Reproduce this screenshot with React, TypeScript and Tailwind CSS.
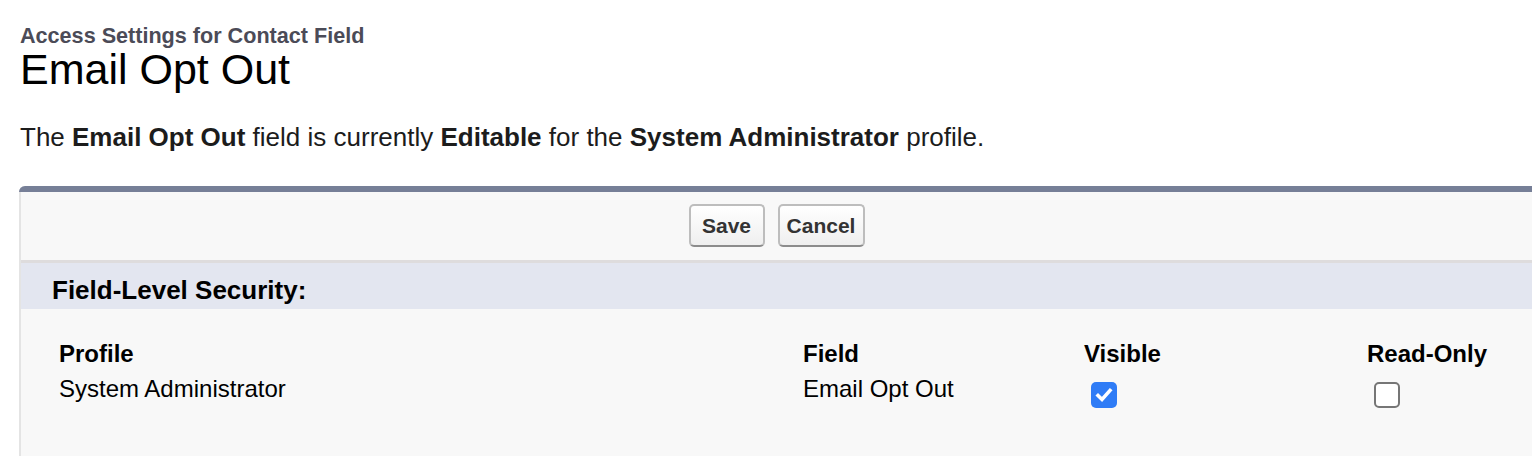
import type { FC } from 'react';

const font = { fontFamily: '"Liberation Sans", Arial, sans-serif' };

const Button: FC<{ label: string; width: string }> = ({ label, width }) => (
  <button
    className={`${width} h-[43px] rounded-[5px] border-2 border-[#bdbdbd] border-b-[#8c8c8c] bg-gradient-to-b from-white to-[#efefef] text-[21px] font-bold leading-none text-[#333]`}
  >
    {label}
  </button>
);

const Checkbox: FC<{ checked?: boolean }> = ({ checked }) =>
  checked ? (
    <div className="ml-[7px] mt-[6px] flex h-[26px] w-[26px] items-center justify-center rounded-[5px] bg-[#2f7cf6]">
      <svg width="20" height="20" viewBox="0 0 20 20" fill="none">
        <path d="M4 10.5 L8 14.5 L16 5.5" stroke="white" strokeWidth="3.6" strokeLinecap="square" />
      </svg>
    </div>
  ) : (
    <div className="ml-[7px] mt-[6px] h-[26px] w-[26px] rounded-[5px] border-2 border-[#767676] bg-white" />
  );

export default function App() {
  return (
    <div className="min-h-[456px] w-[1532px] overflow-hidden bg-white pl-[20px] text-black" style={font}>
      {/* Title */}
      <div className="pt-[25px] text-[21.6px] font-bold leading-[22px] text-[#4b4b57]">
        Access Settings for Contact Field
      </div>
      <h1 className="text-[43px] leading-[44px]">Email Opt Out</h1>

      <p className="mt-[32px] text-[26px] leading-[28px] text-[#1c1c1c]">
        The <b>Email Opt Out</b> field is currently <b>Editable</b> for the <b>System Administrator</b> profile.
      </p>

      {/* Panel */}
      <div className="-ml-[1px] mt-[35px] h-[270px] rounded-tl-[6px] border-l-2 border-[#e4e4e4] bg-[#f8f8f8]">
        <div className="-ml-[2px] h-[6px] rounded-tl-[6px] bg-[#767f97]" />

        <div className="flex justify-center gap-[13px] pb-[13px] pt-[12px]">
          <Button label="Save" width="w-[76px]" />
          <Button label="Cancel" width="w-[87px]" />
        </div>

        <div className="h-[3px] bg-[#dedcdd]" />

        <div className="h-[46px] bg-[#e3e6f0] pl-[31px] pt-[14px] text-[26px] font-bold leading-[26px]">
          Field-Level Security:
        </div>

        {/* Table */}
        <div className="grid grid-cols-[744px_281px_283px_1fr] pl-[38px] pt-[32px] text-[24px] leading-[26px]">
          <div className="font-bold">Profile</div>
          <div className="font-bold">Field</div>
          <div className="font-bold">Visible</div>
          <div className="font-bold">Read-Only</div>

          <div className="mt-[9px]">System Administrator</div>
          <div className="mt-[9px]">Email Opt Out</div>
          <div className="mt-[9px]">
            <Checkbox checked />
          </div>
          <div className="mt-[9px]">
            <Checkbox />
          </div>
        </div>
      </div>
    </div>
  );
}
